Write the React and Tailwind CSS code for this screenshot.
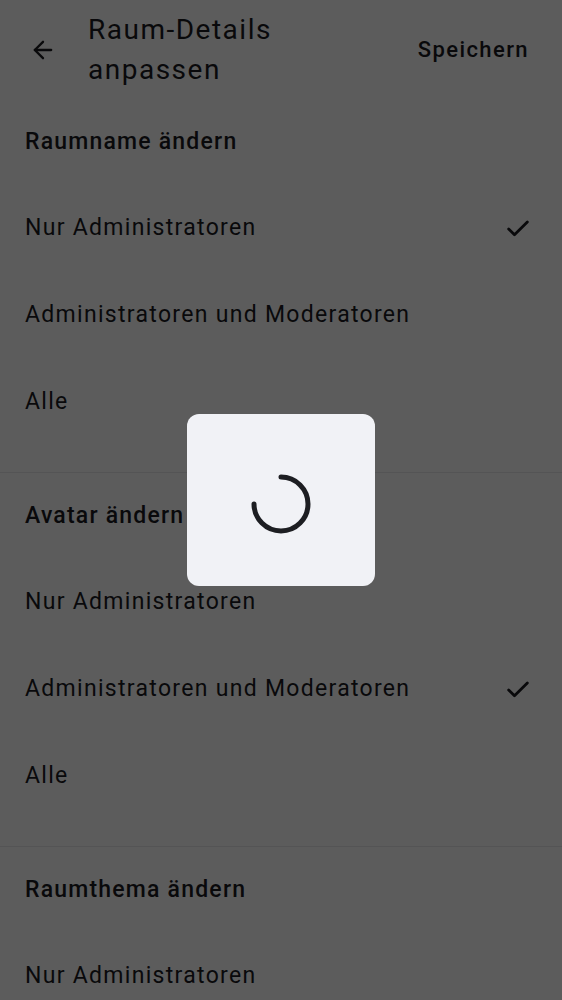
import { ArrowLeft, Check } from 'lucide-react';

const sections = [
  { title: 'Raumname ändern', selected: 0 },
  { title: 'Avatar ändern', selected: 1 },
  { title: 'Raumthema ändern', selected: 2 },
];

const options = ['Nur Administratoren', 'Administratoren und Moderatoren', 'Alle'];

function Section({ title, selected }) {
  return (
    <section className="border-b border-[#e8e8ea] pt-[28px] pb-[26px]">
      <h2 className="flex h-[30px] items-center px-[25px] text-[23px] font-medium tracking-[1.2px] text-[#1b1b1f]">{title}</h2>
      <ul className="mt-[28px]">
        {options.map((opt, i) => (
          <li key={opt} className="flex h-[87px] items-center justify-between pl-[25px] pr-[30px] text-[23px] tracking-[1.3px] text-[#1b1b1f]">
            <span>{opt}</span>
            {i === selected && <Check size={28} strokeWidth={2.4} />}
          </li>
        ))}
      </ul>
    </section>
  );
}

export default function App() {
  return (
    <div className="relative h-[1000px] overflow-hidden bg-white font-['Roboto',sans-serif]">
      <header className="flex h-[99px] items-center pl-[29px] pr-[33px] text-[#1b1b1f]">
        <ArrowLeft size={28} strokeWidth={2} />
        <h1 className="ml-[31px] flex-1 text-[28px] leading-[40px] tracking-[1.5px]">
          Raum-Details
          <br />
          anpassen
        </h1>
        <button className="text-[22px] font-medium tracking-[1.4px]">Speichern</button>
      </header>

      {sections.map((s) => (
        <Section key={s.title} {...s} />
      ))}

      {/* scrim + progress dialog */}
      <div className="absolute inset-0 flex items-center justify-center bg-black/[0.64]">
        <div className="flex h-[172px] w-[188px] items-center justify-center rounded-[12px] bg-[#f1f2f6] pt-[8px]">
          <svg width="64" height="64" viewBox="0 0 64 64" fill="none">
            <path
              d="M32 5 A27 27 0 1 1 5 32"
              stroke="#1d1e22"
              strokeWidth="5"
              strokeLinecap="round"
            />
          </svg>
        </div>
      </div>
    </div>
  );
}
